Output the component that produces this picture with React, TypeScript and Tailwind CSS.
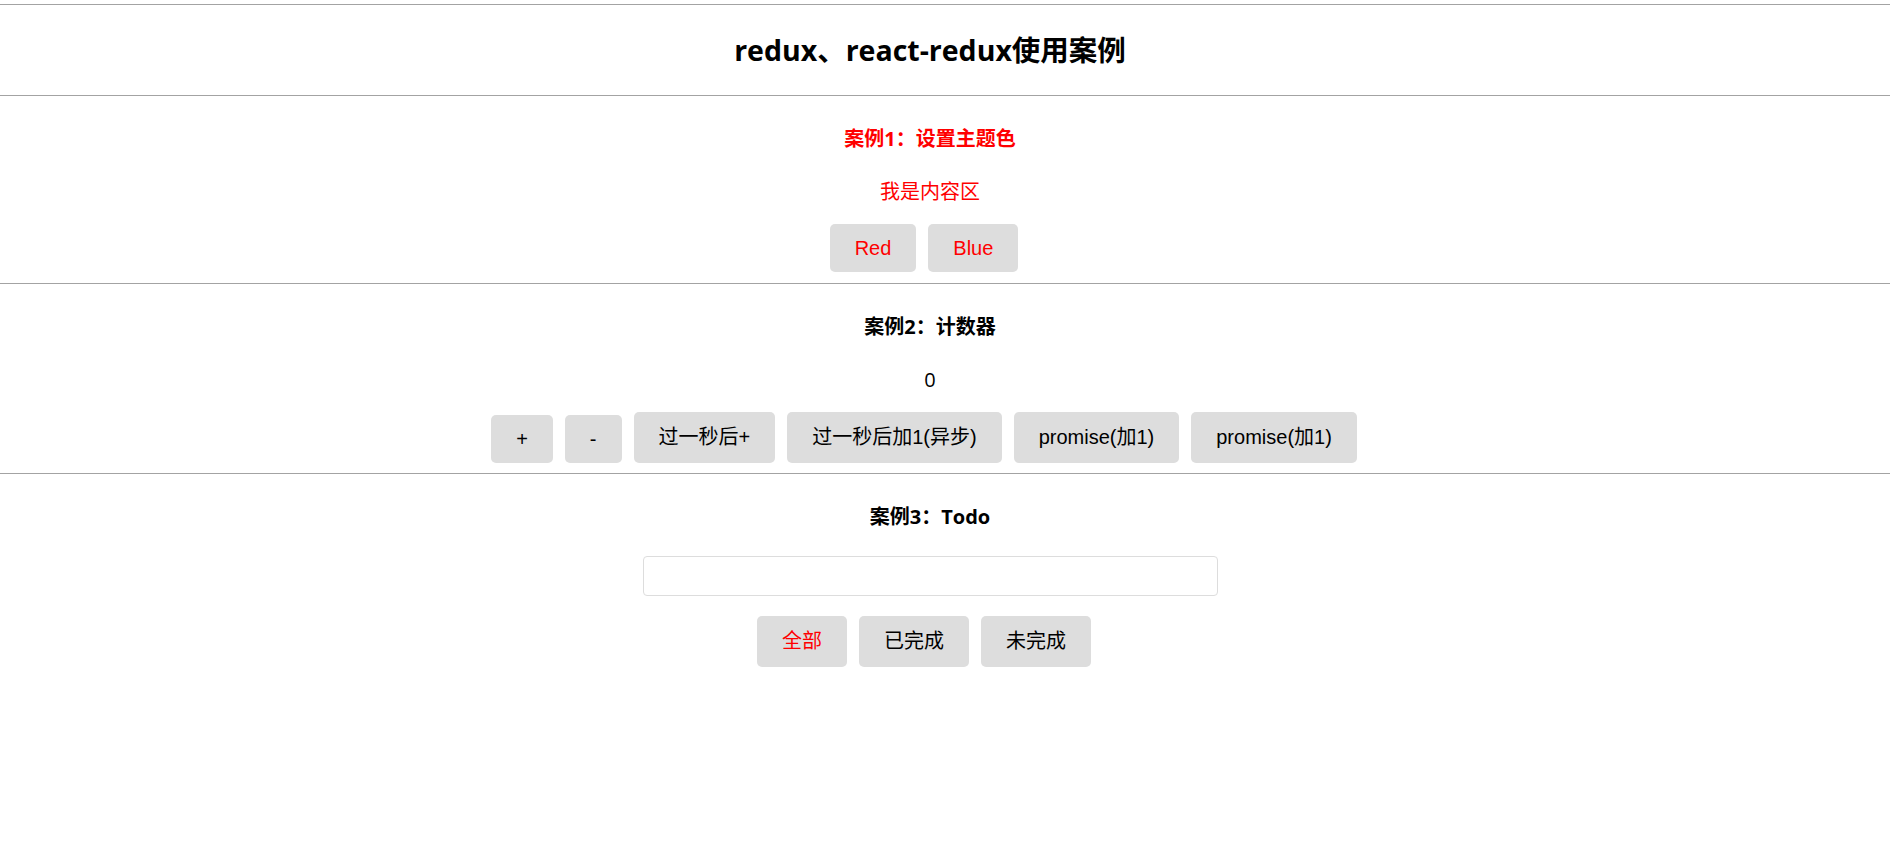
import React, { useState } from 'react';

const cjk = "font-['Liberation_Sans','Noto_Sans_CJK_SC',sans-serif]";
const head = "font-['Open_Sans','Noto_Sans_CJK_SC',sans-serif]";

const Btn: React.FC<{ label: string; tall?: boolean; red?: boolean }> = ({ label, tall, red }) => (
    <button
        className={`${tall ? 'h-[51px]' : 'h-[48px]'} mr-[12px] px-[25px] bg-[#dddddd] rounded-[5px] text-[20px] leading-[23px] ${red ? 'text-[#ff0000]' : 'text-black'} ${cjk}`}
    >
        {label}
    </button>
);

const App: React.FC = () => {
    const [text, setText] = useState('');

    return (
        <div className="w-full bg-white pt-[4px] min-h-[841px]">
            {/* Title */}
            <div className="border-t border-[#a3a3a3] h-[91px] flex items-center justify-center pr-[30px]">
                <h1 className={`text-[28.5px] font-bold text-black ${head}`}>redux、react-redux使用案例</h1>
            </div>

            {/* Case 1 */}
            <div className="border-t border-[#a3a3a3] pt-[31px] pb-[11px] pr-[30px] flex flex-col items-center">
                <h3 className={`text-[20px] leading-[24px] font-bold text-[#ff0000] ${head}`}>案例1：设置主题色</h3>
                <p className={`mt-[29px] text-[20px] leading-[24px] text-[#ff0000] ${cjk}`}>我是内容区</p>
                <div className="mt-[20px] flex items-end h-[48px]">
                    <Btn label="Red" red />
                    <Btn label="Blue" red />
                </div>
            </div>

            {/* Case 2 */}
            <div className="border-t border-[#a3a3a3] pt-[31px] pb-[10px] pr-[30px] flex flex-col items-center">
                <h3 className={`text-[20px] leading-[24px] font-bold text-black ${head}`}>案例2：计数器</h3>
                <p className={`mt-[29px] text-[20px] leading-[24px] text-black ${head}`}>0</p>
                <div className="mt-[20px] flex items-end h-[51px]">
                    <Btn label="+" />
                    <Btn label="-" />
                    <Btn label="过一秒后+" tall />
                    <Btn label="过一秒后加1(异步)" tall />
                    <Btn label="promise(加1)" tall />
                    <Btn label="promise(加1)" tall />
                </div>
            </div>

            {/* Case 3 */}
            <div className="border-t border-[#a3a3a3] pt-[31px] pr-[30px] flex flex-col items-center">
                <h3 className={`text-[20px] leading-[24px] font-bold text-black ${head}`}>案例3：Todo</h3>
                <input
                    value={text}
                    onChange={(e) => setText(e.target.value)}
                    className="mt-[27px] w-[575px] h-[40px] border border-[#dddddd] rounded-[4px] px-2 outline-none"
                />
                <div className="mt-[20px] flex items-end h-[51px]">
                    <Btn label="全部" tall red />
                    <Btn label="已完成" tall />
                    <Btn label="未完成" tall />
                </div>
            </div>
        </div>
    );
};

export default App;
